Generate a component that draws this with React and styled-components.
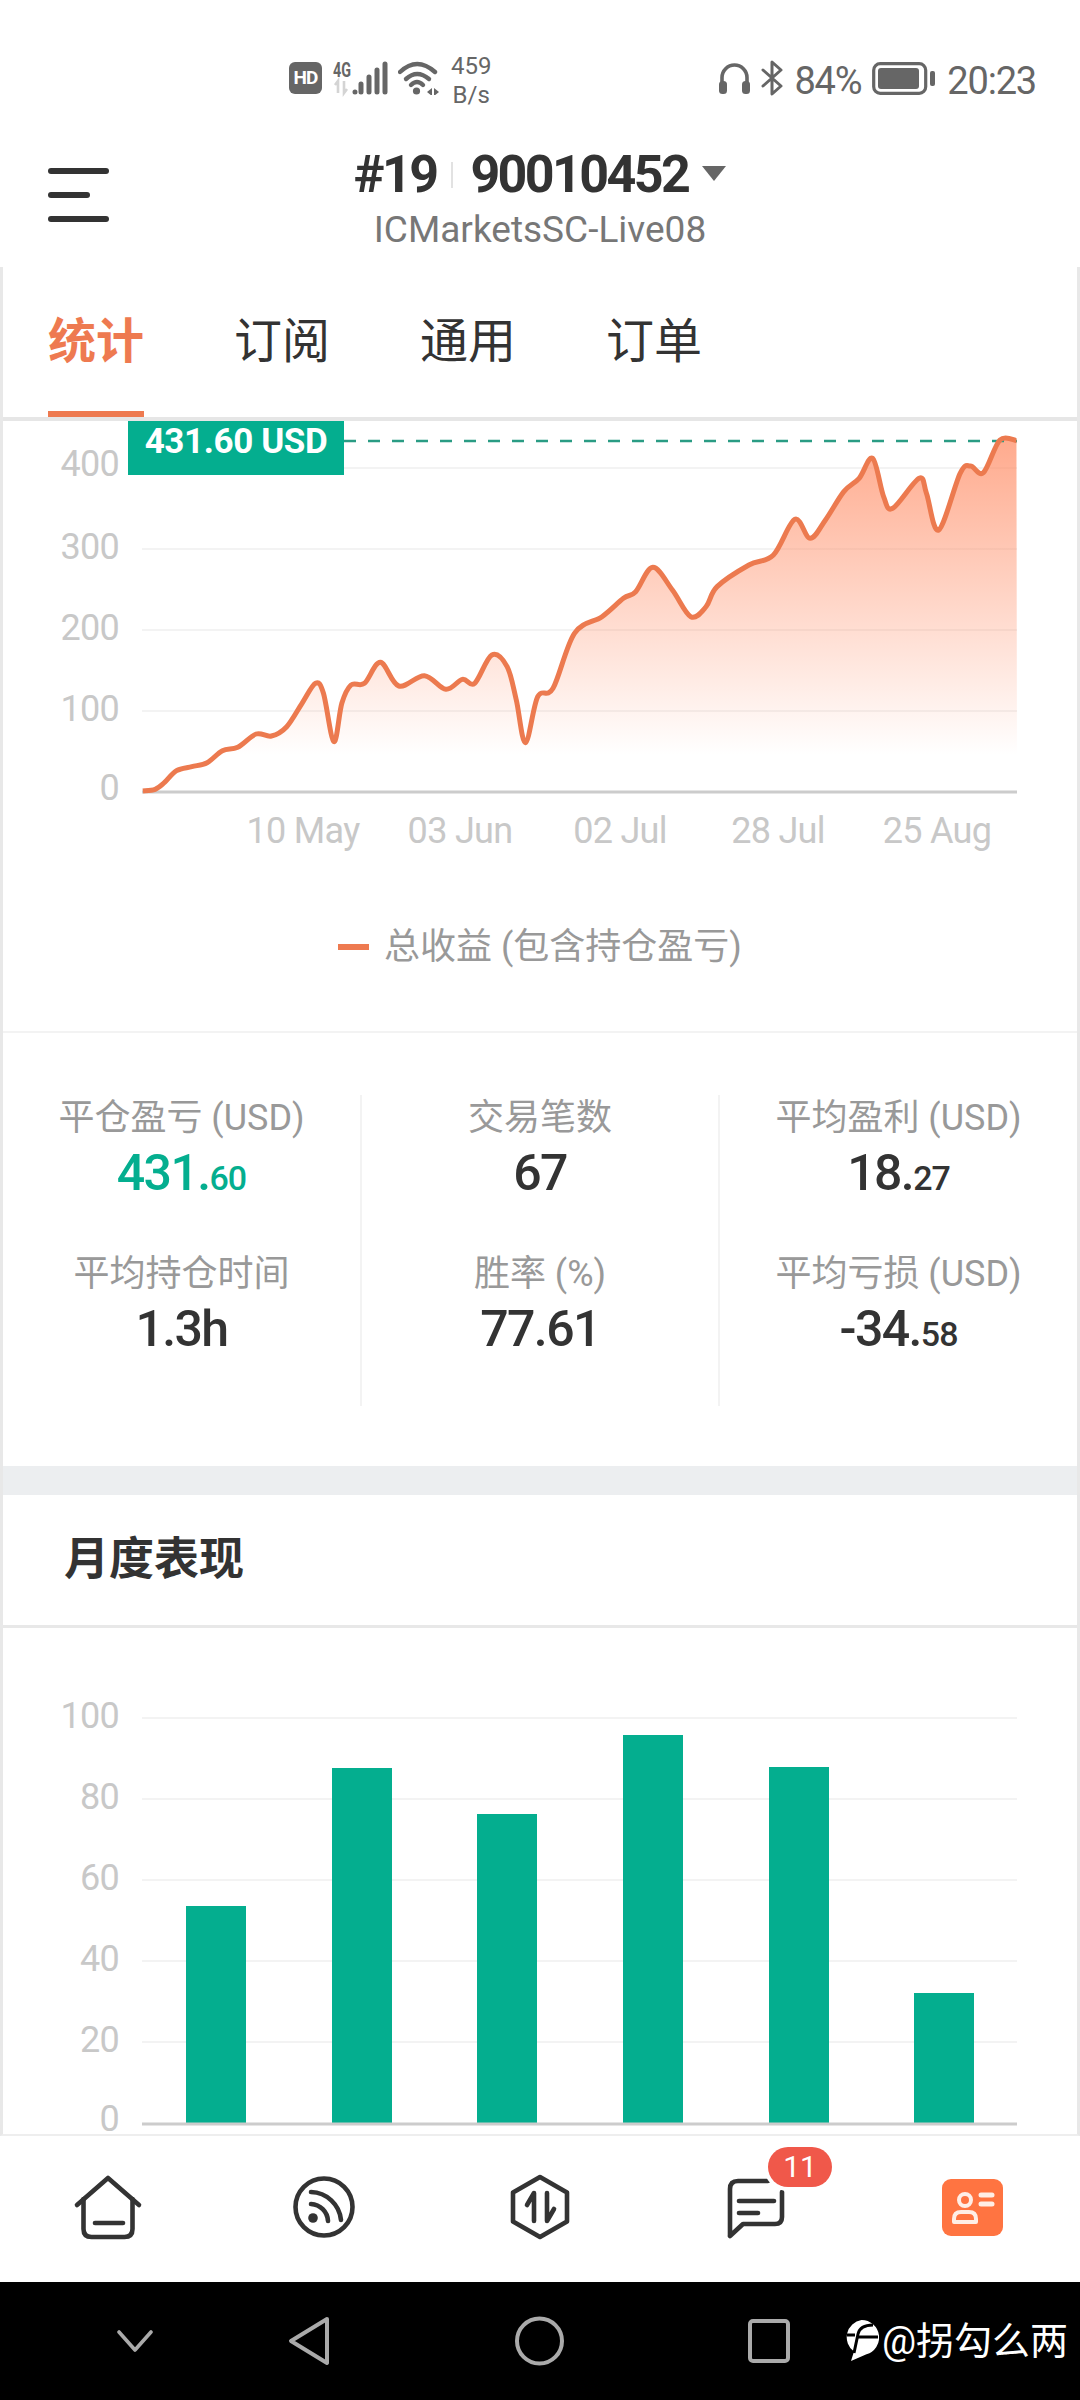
import React from "react";
import styled, { createGlobalStyle } from "styled-components";

const GlobalStyle = createGlobalStyle`
    html, body {
        margin : 0;
        padding : 0;
        background : #ffffff;
    }

    body {
        font-family : Roboto, "Noto Sans CJK SC", sans-serif;
    }
`;

const tabs = ["统计", "订阅", "通用", "订单"];

const stats = [
    [
        { label : "平仓盈亏 (USD)", big : "431.", small : "60", green : true },
        { label : "平均持仓时间", big : "1.3h" },
    ],
    [
        { label : "交易笔数", big : "67" },
        { label : "胜率 (%)", big : "77.61" },
    ],
    [
        { label : "平均盈利 (USD)", big : "18.", small : "27" },
        { label : "平均亏损 (USD)", big : "-34.", small : "58" },
    ],
];

// traced from the curve, x / y are scaled to page px below
const curve = [
    [70,1143],[90,1138],[105,1118],[125,1082],[150,1070],[175,1058],[200,1022],[225,1012],[255,972],[280,978],
    [305,950],[330,880],[352,820],[365,850],[382,995],[395,880],[410,825],[432,820],[458,757],[488,828],
    [530,797],[565,838],[592,808],[612,820],[640,735],[665,770],[680,870],[695,998],[715,860],[740,835],
    [775,670],[820,620],[855,565],[875,545],[903,472],[935,540],[965,620],[990,590],[1008,530],[1060,465],
    [1100,435],[1135,328],[1160,385],[1185,330],[1215,245],[1240,205],[1262,145],[1280,260],[1295,295],[1338,205],
    [1350,250],[1370,360],[1405,190],[1422,168],[1443,188],[1470,90],[1497,92],
].map(([x, y]) => [100 + x * 0.6122, 410 + y / 3]);

function smoothPath(points) {
    let d = `M${points[0][0]} ${points[0][1]}`;
    for (let i = 0; i < points.length - 1; i++) {
        const p0 = points[Math.max(i - 1, 0)];
        const p1 = points[i];
        const p2 = points[i + 1];
        const p3 = points[Math.min(i + 2, points.length - 1)];
        const c1x = p1[0] + (p2[0] - p0[0]) / 6;
        const c1y = p1[1] + (p2[1] - p0[1]) / 6;
        const c2x = p2[0] - (p3[0] - p1[0]) / 6;
        const c2y = p2[1] - (p3[1] - p1[1]) / 6;
        d += ` C${c1x} ${c1y} ${c2x} ${c2y} ${p2[0]} ${p2[1]}`;
    }
    return d;
}

const linePath = smoothPath(curve);

const profitTicks = [
    { label : "400", y : 468, textY : 476 },
    { label : "300", y : 549, textY : 559 },
    { label : "200", y : 630, textY : 640 },
    { label : "100", y : 711, textY : 721 },
];

const dateTicks = [
    { label : "10 May", x : 303 },
    { label : "03 Jun", x : 460 },
    { label : "02 Jul", x : 620 },
    { label : "28 Jul", x : 778 },
    { label : "25 Aug", x : 937 },
];

const monthTicks = [
    { label : "100", y : 1718 },
    { label : "80", y : 1799 },
    { label : "60", y : 1880 },
    { label : "40", y : 1961 },
    { label : "20", y : 2042 },
];

const monthBars = [
    { x : 186, top : 1906 },
    { x : 332, top : 1768 },
    { x : 477, top : 1814 },
    { x : 623, top : 1735 },
    { x : 769, top : 1767 },
    { x : 914, top : 1993 },
];

function Signal() {
    return (
        <SignalSvg width="54" height="34" viewBox="0 0 54 34">
            <text x="0" y="16" fontSize="20" fontWeight="700" fill="#666" textLength="18" lengthAdjust="spacingAndGlyphs">4G</text>
            <path d="M5 32V20l-3 4M11 20v12l3-4" stroke="#d4d4d4" strokeWidth="2.6" fill="none" />
            <g stroke="#666" strokeWidth="5" strokeLinecap="round">
                <path d="M22 31v.1M28 23v8M36 16v15M44 9v22M52 3v28" />
            </g>
        </SignalSvg>
    );
}

function Wifi() {
    return (
        <svg width="42" height="34" viewBox="0 0 42 34">
            <g stroke="#666" strokeWidth="4.4" fill="none" strokeLinecap="round">
                <path d="M2 11Q19-5 37 11" />
                <path d="M8 18Q19 8 31 18" />
                <path d="M13 24Q19 18 25 24" />
            </g>
            <circle cx="18.5" cy="30" r="3.6" fill="#666" />
            <path d="M29 31l5-4v8zM36 27l5 4-5 4z" fill="#666" />
        </svg>
    );
}

function Headphones() {
    return (
        <svg width="31" height="32" viewBox="0 0 31 32">
            <path d="M3 24V15.5a12.5 12.5 0 0 1 25 0V24" stroke="#666" strokeWidth="3.6" fill="none" />
            <rect x="0" y="19" width="8" height="13" rx="3.5" fill="#666" />
            <rect x="23" y="19" width="8" height="13" rx="3.5" fill="#666" />
        </svg>
    );
}

function Bluetooth() {
    return (
        <svg width="22" height="36" viewBox="0 0 22 36">
            <path d="M2 10l18 16-9 8V2l9 8L2 26" stroke="#666" strokeWidth="3" fill="none" strokeLinejoin="round" strokeLinecap="round" />
        </svg>
    );
}

function Battery() {
    return (
        <svg width="63" height="33" viewBox="0 0 63 33">
            <rect x="1.7" y="1.7" width="52" height="29.6" rx="6.5" stroke="#666" strokeWidth="3.2" fill="none" />
            <rect x="6" y="6" width="41" height="21" rx="3" fill="#666" />
            <rect x="58" y="9" width="5" height="15" rx="2" fill="#666" />
        </svg>
    );
}

function HomeIcon() {
    return (
        <svg width="70" height="70" viewBox="0 0 70 70">
            <g stroke="#333" strokeWidth="4.6" fill="none" strokeLinecap="round" strokeLinejoin="round">
                <path d="M4 33L35 6l31 27" />
                <path d="M10.5 27v30q0 8 8 8h33q8 0 8-8V27" />
                <path d="M22 51h28" />
            </g>
        </svg>
    );
}

function FeedIcon() {
    return (
        <svg width="70" height="70" viewBox="0 0 70 70">
            <g stroke="#333" strokeWidth="4.6" fill="none" strokeLinecap="round">
                <circle cx="35" cy="35" r="28.5" />
                <path d="M22 20a31 31 0 0 1 30 28" />
                <path d="M22 32a18 18 0 0 1 17 17" />
            </g>
            <circle cx="24" cy="46" r="4.8" fill="#333" />
        </svg>
    );
}

function TradeIcon() {
    return (
        <svg width="70" height="70" viewBox="0 0 70 70">
            <g stroke="#333" strokeWidth="4.6" fill="none" strokeLinecap="round" strokeLinejoin="round">
                <path d="M35 5l27 15.500v29L35 65 8 49.500v-29z" />
                <path d="M29 49V21l-7 12" />
                <path d="M42 21v28l7-12" />
            </g>
        </svg>
    );
}

function ChatIcon() {
    return (
        <svg width="70" height="70" viewBox="0 0 70 70">
            <g stroke="#333" strokeWidth="4.6" fill="none" strokeLinecap="round" strokeLinejoin="round">
                <path d="M9 64V17q0-8 8-8h30M61 20v25q0 7-7 7H22L9 64" />
                <path d="M18 29h35" />
                <path d="M18 41h19" />
            </g>
        </svg>
    );
}

function ProfileIcon() {
    return (
        <svg width="70" height="70" viewBox="0 0 70 70">
            <rect x="5" y="7" width="61" height="57" rx="9" fill="#ff7441" />
            <g stroke="#ffeee6" fill="none" strokeWidth="4" strokeLinecap="round">
                <circle cx="28" cy="28" r="6" />
                <path d="M17 50v-3q0-7 7-7h8q7 0 7 7v3z" strokeLinejoin="round" />
                <path d="M44 23h11" strokeWidth="5" />
                <path d="M44 32h11" strokeWidth="5" />
            </g>
        </svg>
    );
}

function SysChevron() {
    return (
        <svg width="36" height="22" viewBox="0 0 36 22">
            <path d="M2 2l16 18L34 2" stroke="#aaa" strokeWidth="3.6" fill="none" strokeLinecap="round" strokeLinejoin="round" />
        </svg>
    );
}

function SysBack() {
    return (
        <svg width="42" height="50" viewBox="0 0 42 50">
            <path d="M39 3L3 25l36 22z" stroke="#aaa" strokeWidth="4" fill="none" strokeLinejoin="round" />
        </svg>
    );
}

function SysHome() {
    return (
        <svg width="49" height="50" viewBox="0 0 49 50">
            <circle cx="24.5" cy="25" r="22.500" stroke="#aaa" strokeWidth="4" fill="none" />
        </svg>
    );
}

function SysRecent() {
    return (
        <svg width="42" height="44" viewBox="0 0 42 44">
            <rect x="2" y="2" width="38" height="40" rx="3" stroke="#aaa" strokeWidth="4" fill="none" />
        </svg>
    );
}

function WatermarkLogo() {
    return (
        <svg width="35" height="42" viewBox="0 0 35 42">
            <path d="M17.500 0a17.500 17.500 0 0 1 5 34.300L7 41l3-9.500A17.500 17.500 0 0 1 17.500 0z" fill="#fff" />
            <g stroke="#000" fill="none">
                <path d="M29 5Q16 5 14 14L10 33" strokeWidth="3" />
                <path d="M3 15h8M13 17h21" strokeWidth="3" />
            </g>
        </svg>
    );
}

export default function App() {
    return (
        <Screen>
            <GlobalStyle />

            <StatusBar>
                <StatusGroup>
                    <HdBadge>HD</HdBadge>
                    <Signal />
                    <Wifi />
                    <NetSpeed>
                        <span>459</span>
                        <span>B/s</span>
                    </NetSpeed>
                </StatusGroup>
                <StatusGroup>
                    <Headphones />
                    <Bluetooth />
                    <StatusText>84%</StatusText>
                    <Battery />
                    <StatusText $time>20:23</StatusText>
                </StatusGroup>
            </StatusBar>

            <TopBar>
                <Burger>
                    <li />
                    <li className="short" />
                    <li />
                </Burger>
                <Account>
                    <AccountRow>
                        <span>#19</span>
                        <AccountSplit />
                        <span>90010452</span>
                        <Caret />
                    </AccountRow>
                    <ServerName>ICMarketsSC-Live08</ServerName>
                </Account>
            </TopBar>

            <Content>
                <TabBar>
                    {tabs.map((tab, i) => (
                        <Tab key={tab} $active={i === 0}>{tab}</Tab>
                    ))}
                </TabBar>

                <ChartSection>
                    <PriceTag>431.60 USD</PriceTag>
                    <ChartSvg width="1074" height="445" viewBox="3 421 1074 445">
                        <defs>
                            <linearGradient id="profitFill" gradientUnits="userSpaceOnUse" x1="0" y1="441" x2="0" y2="755">
                                <stop offset="0" stopColor="#ff8a62" stopOpacity="0.72" />
                                <stop offset="1" stopColor="#ff8a62" stopOpacity="0" />
                            </linearGradient>
                        </defs>
                        {profitTicks.map((t) => (
                            <g key={t.label}>
                                <line x1="142" x2="1017" y1={t.y} y2={t.y} stroke="#f3f3f3" strokeWidth="2" />
                                <AxisText x="119" y={t.textY} textAnchor="end">{t.label}</AxisText>
                            </g>
                        ))}
                        <AxisText x="119" y="800" textAnchor="end">0</AxisText>
                        <path d={`${linePath} L1017 792 L143 792 Z`} fill="url(#profitFill)" />
                        <line x1="344" x2="1017" y1="441" y2="441" stroke="#2a9c84" strokeWidth="2.500" strokeDasharray="12 12" />
                        <line x1="142" x2="1017" y1="792" y2="792" stroke="#cccccc" strokeWidth="3" />
                        <path d={linePath} stroke="#ec7a4f" strokeWidth="5" fill="none" strokeLinejoin="round" />
                        {dateTicks.map((t) => (
                            <AxisText key={t.label} x={t.x} y="843" textAnchor="middle">{t.label}</AxisText>
                        ))}
                    </ChartSvg>
                    <Legend>
                        <LegendDash />
                        总收益 (包含持仓盈亏)
                    </Legend>
                </ChartSection>

                <StatsSection>
                    <StatsGrid>
                        {stats.map((col, i) => (
                            <StatColumn key={i} $divider={i > 0}>
                                {col.map((s) => (
                                    <Stat key={s.label}>
                                        <StatLabel>{s.label}</StatLabel>
                                        <StatValue $green={s.green}>
                                            {s.big}{s.small && <small>{s.small}</small>}
                                        </StatValue>
                                    </Stat>
                                ))}
                            </StatColumn>
                        ))}
                    </StatsGrid>
                </StatsSection>

                <SectionGap />

                <SectionHead>月度表现</SectionHead>

                <MonthChart>
                    <svg width="1074" height="505" viewBox="3 1628 1074 505">
                        {monthTicks.map((t) => (
                            <g key={t.label}>
                                <line x1="142" x2="1017" y1={t.y} y2={t.y} stroke="#f3f3f3" strokeWidth="2" />
                                <AxisText x="119" y={t.y + 10} textAnchor="end">{t.label}</AxisText>
                            </g>
                        ))}
                        <AxisText x="119" y="2131" textAnchor="end">0</AxisText>
                        {monthBars.map((b) => (
                            <rect key={b.x} x={b.x} y={b.top} width="60" height={2123 - b.top} fill="#04ae8f" />
                        ))}
                        <line x1="142" x2="1017" y1="2124" y2="2124" stroke="#cccccc" strokeWidth="3" />
                    </svg>
                </MonthChart>
            </Content>

            <BottomNav>
                <NavItem><HomeIcon /></NavItem>
                <NavItem><FeedIcon /></NavItem>
                <NavItem><TradeIcon /></NavItem>
                <NavItem>
                    <ChatIcon />
                    <Badge>11</Badge>
                </NavItem>
                <NavItem><ProfileIcon /></NavItem>
            </BottomNav>

            <SystemNav>
                <SysSlot><SysChevron /></SysSlot>
                <SysSlot $gap={135}><SysBack /></SysSlot>
                <SysSlot $gap={185}><SysHome /></SysSlot>
                <SysSlot $gap={184}><SysRecent /></SysSlot>
                <SysSlot $gap={54}>
                    <WatermarkLogo />
                    <Watermark>@拐勾么两</Watermark>
                </SysSlot>
            </SystemNav>
        </Screen>
    );
}

const Screen = styled.div`
    width : 1080px;
    height : 2400px;
    display : flex;
    flex-direction : column;
    overflow : hidden;
    background : #ffffff;
`;

const StatusBar = styled.div`
    height : 130px;
    box-sizing : border-box;
    padding : 56px 44px 0 289px;
    display : flex;
    justify-content : space-between;
    align-items : flex-start;
`;

const StatusGroup = styled.div`
    display : flex;
    align-items : center;
    gap : 11px;
    height : 44px;
`;

const SignalSvg = styled.svg`
    overflow : visible;
`;

const HdBadge = styled.div`
    width : 33px;
    height : 32px;
    border-radius : 6px;
    background : #666666;
    color : #ffffff;
    font-size : 19px;
    font-weight : 700;
    letter-spacing : -1px;
    line-height : 32px;
    text-align : center;
`;

const NetSpeed = styled.div`
    display : flex;
    flex-direction : column;
    align-items : center;
    margin-top : 6px;
    color : #666666;
    font-size : 24px;
    line-height : 29px;
`;

const StatusText = styled.span`
    color : #666666;
    font-size : 38px;
    line-height : 44px;
    margin : 5px 0 0 ${(props) => (props.$time ? "1px" : "0")};
    letter-spacing : -1.2px;
`;

const TopBar = styled.div`
    height : 137px;
    display : grid;
    grid-template-columns : 1fr auto 1fr;
    align-items : start;
`;

const Burger = styled.ul`
    list-style : none;
    margin : 38px 0 0 48px;
    padding : 0;
    display : flex;
    flex-direction : column;
    gap : 18px;

    li {
        width : 61px;
        height : 6px;
        border-radius : 3px;
        background : #333333;
    }

    li.short {
        width : 42px;
    }
`;

const Account = styled.div`
    grid-column : 2;
    padding-top : 20px;
    display : flex;
    flex-direction : column;
    align-items : center;
`;

const AccountRow = styled.div`
    display : flex;
    align-items : center;
    color : #333333;
    font-size : 52px;
    font-weight : 700;
    line-height : 50px;
    letter-spacing : -2.6px;
`;

const AccountSplit = styled.i`
    width : 2px;
    height : 26px;
    margin : 0 17px 0 15px;
    background : #e2e2e2;
`;

const Caret = styled.i`
    width : 0;
    height : 0;
    margin : -4px 0 0 14px;
    border-top : 15px solid #666666;
    border-left : 12px solid transparent;
    border-right : 12px solid transparent;
`;

const ServerName = styled.div`
    margin-top : 10px;
    color : #777777;
    font-size : 37px;
    line-height : 40px;
`;

const Content = styled.div`
    height : 1869px;
    border-left : 3px solid #e8e8e8;
    border-right : 3px solid #e8e8e8;
    border-bottom : 2px solid #eeeeee;
    box-sizing : border-box;
`;

const TabBar = styled.div`
    height : 154px;
    box-sizing : border-box;
    padding-left : 45px;
    display : flex;
    gap : 90px;
    border-bottom : 4px solid #e6e6e6;
`;

const Tab = styled.div`
    height : 150px;
    width : 96px;
    box-sizing : border-box;
    border-bottom : 6px solid ${(props) => (props.$active ? "#ee7a50" : "transparent")};
    color : ${(props) => (props.$active ? "#ee7a50" : "#333333")};
    font-size : 48px;
    font-weight : ${(props) => (props.$active ? 700 : 400)};
    line-height : 150px;
    text-align : center;
`;

const ChartSection = styled.section`
    position : relative;
    height : 612px;
    box-sizing : border-box;
    border-bottom : 2px solid #f3f3f3;
`;

const ChartSvg = styled.svg`
    display : block;
`;

const PriceTag = styled.div`
    position : absolute;
    z-index : 1;
    left : 125px;
    top : 0;
    width : 216px;
    height : 54px;
    background : #04ae8f;
    color : #ffffff;
    font-size : 35px;
    font-weight : 700;
    line-height : 42px;
    letter-spacing : -0.4px;
    text-align : center;
`;

const AxisText = styled.text`
    fill : #c8c8c8;
    font-size : 36px;
    letter-spacing : -0.7px;
`;

const Legend = styled.div`
    margin-top : 56px;
    display : flex;
    align-items : center;
    justify-content : center;
    color : #999999;
    font-size : 36px;
    line-height : 50px;
`;

const LegendDash = styled.i`
    width : 31px;
    height : 6px;
    margin-right : 15px;
    background : #ee7a50;
`;

const StatsSection = styled.section`
    height : 433px;
    box-sizing : border-box;
    padding-top : 62px;
`;

const StatsGrid = styled.div`
    height : 311px;
    display : grid;
    grid-template-columns : 357px 358px 359px;
`;

const StatColumn = styled.div`
    display : flex;
    flex-direction : column;
    gap : 53px;
    border-left : ${(props) => (props.$divider ? "2px solid #f3f3f3" : "none")};
`;

const Stat = styled.div`
    display : flex;
    flex-direction : column;
    align-items : center;
    gap : 7px;
`;

const StatLabel = styled.div`
    color : #999999;
    font-size : 36px;
    line-height : 46px;
`;

const StatValue = styled.div`
    height : 50px;
    color : ${(props) => (props.$green ? "#04ae8f" : "#333333")};
    font-size : 50px;
    font-weight : 500;
    line-height : 50px;
    letter-spacing : -1.6px;

    small {
        font-size : 34px;
        letter-spacing : -1px;
    }
`;

const SectionGap = styled.div`
    height : 29px;
    background : #eceef0;
`;

const SectionHead = styled.h2`
    height : 133px;
    box-sizing : border-box;
    margin : 0;
    padding-left : 61px;
    border-bottom : 3px solid #e8e8e8;
    color : #333333;
    font-size : 45px;
    font-weight : 700;
    line-height : 130px;
`;

const MonthChart = styled.div`
    svg {
        display : block;
        overflow : visible;
    }
`;

const BottomNav = styled.nav`
    height : 146px;
    box-sizing : border-box;
    padding-bottom : 5px;
    display : grid;
    grid-template-columns : repeat(5, 1fr);
    align-items : center;
    justify-items : center;
`;

const NavItem = styled.div`
    position : relative;
    width : 70px;
    height : 70px;
`;

const Badge = styled.div`
    position : absolute;
    left : 47px;
    top : -25px;
    width : 64px;
    height : 40px;
    border-radius : 20px;
    background : #f0584a;
    box-shadow : 0 0 0 4px #ffffff;
    color : #ffffff;
    font-size : 30px;
    line-height : 40px;
    text-align : center;
`;

const SystemNav = styled.div`
    flex : 1;
    padding-left : 117px;
    display : flex;
    align-items : center;
    background : #000000;
`;

const SysSlot = styled.div`
    display : flex;
    align-items : center;
    margin-left : ${(props) => props.$gap || 0}px;

    svg {
        display : block;
    }
`;

const Watermark = styled.span`
    margin-left : 3px;
    color : #ffffff;
    font-size : 38px;
    line-height : 44px;
    white-space : nowrap;
`;
